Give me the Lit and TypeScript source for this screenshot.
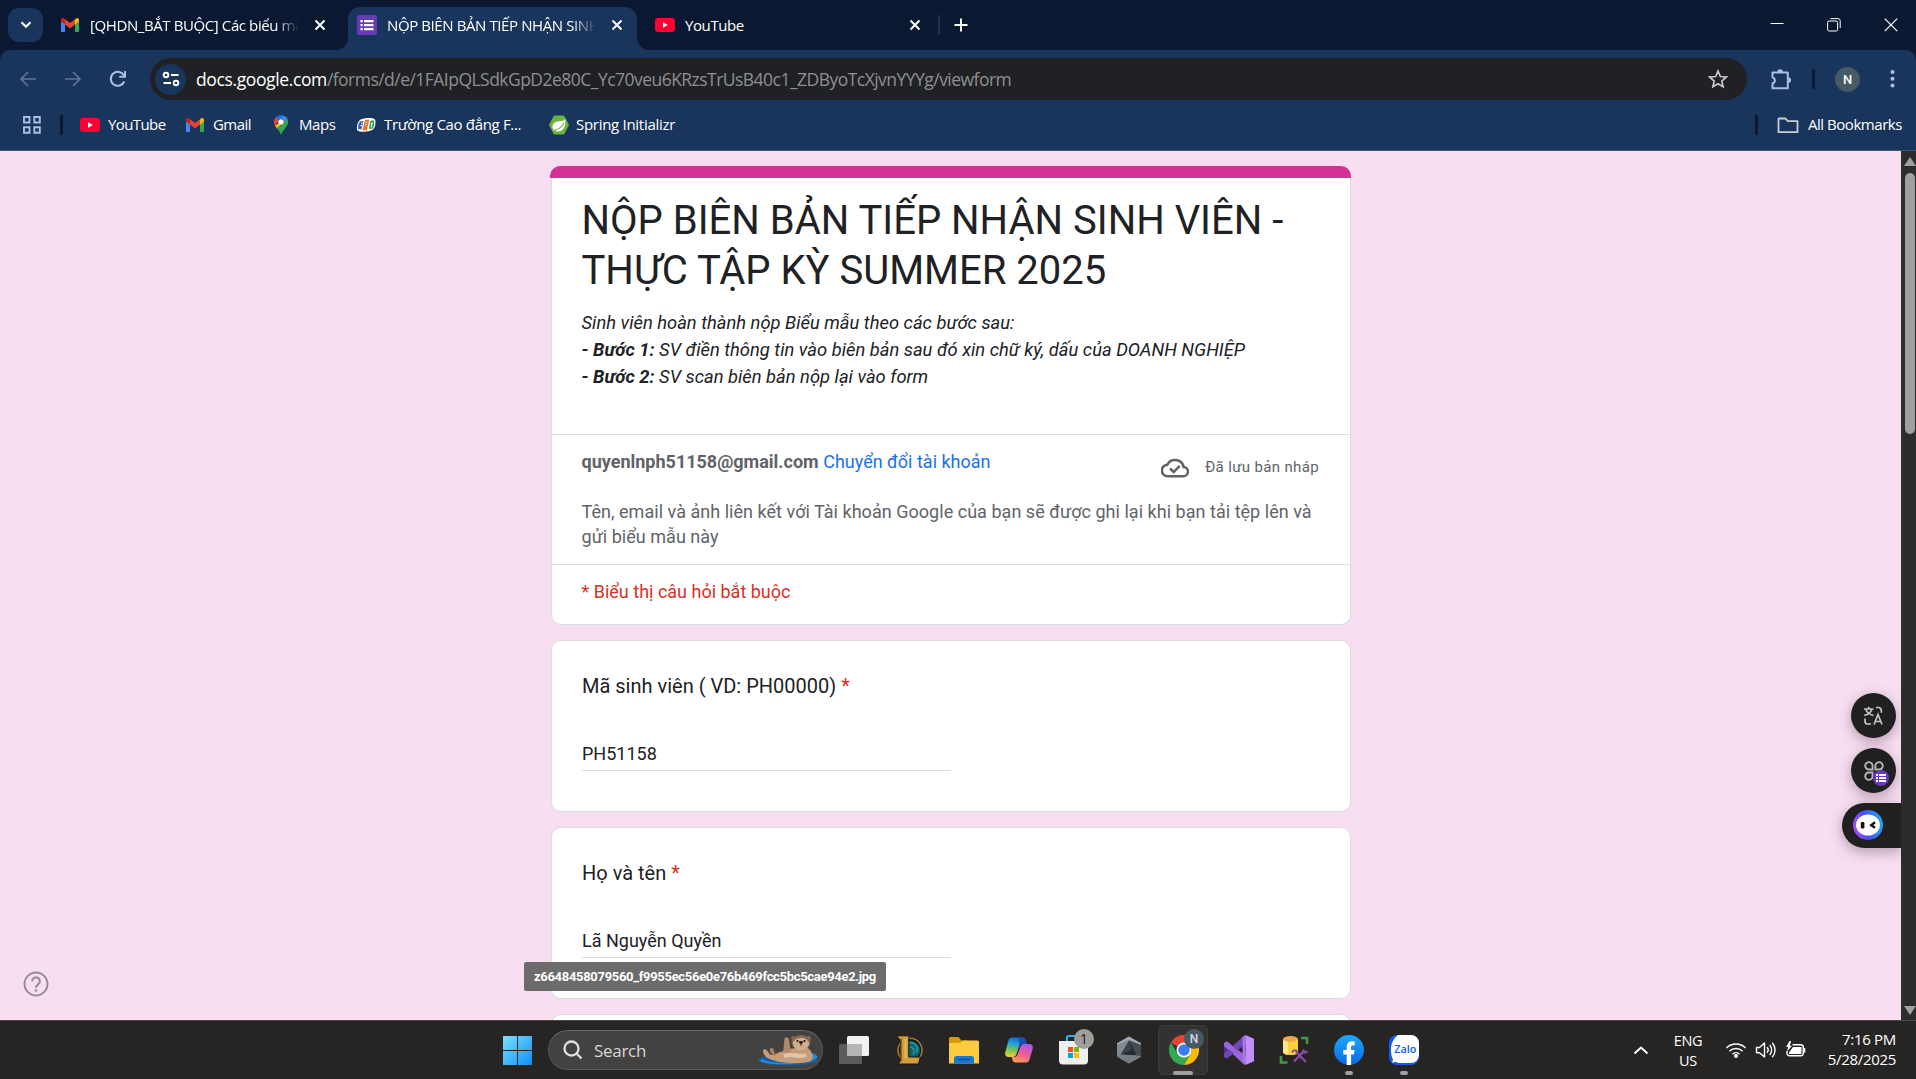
import { LitElement, html, svg, css, nothing } from "lit";
import { customElement, property } from "lit/decorators.js";

const gmail = svg`<svg width="18" height="14" viewBox="0 0 18 14">
  <path d="M0 2.5V12.7C0 13.4.6 14 1.3 14H4V5.2Z" fill="#4285f4"/>
  <path d="M18 2.5V12.7c0 .7-.6 1.3-1.3 1.3H14V5.2Z" fill="#34a853"/>
  <path d="M14 1.4V6.6l4-3V2C18 .3 16.2-.6 14.9.6Z" fill="#fbbc04"/>
  <path d="M4 6.6V1.3l5 3.8 5-3.8V6.6L9 10.4Z" fill="#ea4335"/>
  <path d="M0 2v1.6l4 3V1.3L3.1.6C1.8-.5 0 .3 0 2Z" fill="#c5221f"/></svg>`;
const youtube = svg`<svg width="20" height="14" viewBox="0 0 20 14"><rect width="20" height="14" rx="3.2" fill="#ff0033"/><path d="M8 4.3v5.4L12.8 7z" fill="#fff"/></svg>`;
const forms = (s: number) => svg`<svg width="${s}" height="${s}" viewBox="0 0 20 20"><rect width="20" height="20" rx="1.5" fill="#673ab7"/>
  <path d="M3.5 5h2.2v2.2H3.5zM7 5h9.5v2.2H7zM3.5 9h2.2v2.2H3.5zM7 9h9.5v2.2H7zM3.5 13h2.2v2.2H3.5zM7 13h9.5v2.2H7z" fill="#fff"/></svg>`;
const cross = svg`<svg width="12" height="12" viewBox="0 0 12 12"><path d="M1.5 1.500l9 9M10.500 1.500l-9 9" stroke="#fff" stroke-width="1.900" fill="none"/></svg>`;

@customElement("browser-tabs")
export class BrowserTabs extends LitElement {
  static styles = css`
    :host { display: flex; height: 50px; background: #0a1931; color: #fff; font: 15px "Open Sans", "Noto Sans", sans-serif; }
    svg { display: block; flex: none; }
    .search { width: 35px; height: 34px; margin: 8px 0 0 8px; border-radius: 11px; background: #1a355b; display: grid; place-items: center; flex: none; }
    .tab { display: flex; align-items: center; height: 43px; margin-top: 7px; box-sizing: border-box; padding-bottom: 7px; flex: none; }
    .t1 { width: 305px; padding-left: 18px; }
    .t2 { width: 289px; padding-left: 9px; background: #1a355b; border-radius: 12px 12px 0 0; position: relative; }
    .t2::before, .t2::after { content: ""; position: absolute; bottom: 0; width: 12px; height: 12px; }
    .t2::before { right: 100%; background: radial-gradient(circle at 0 0, #0a1931 11.5px, #1a355b 12.3px); }
    .t2::after { left: 100%; background: radial-gradient(circle at 100% 0, #0a1931 11.5px, #1a355b 12.3px); }
    .t3 { width: 301px; padding-left: 18px; }
    .name { width: 210px; margin: 0 14px 0 10px; overflow: hidden; white-space: nowrap; letter-spacing: -0.4px; line-height: 24px; }
    .t1 .name { margin: 0 14px 0 11px; }
    .fade { -webkit-mask-image: linear-gradient(90deg, #000 185px, transparent 209px); mask-image: linear-gradient(90deg, #000 185px, transparent 209px); }
    .rule { width: 2px; height: 20px; margin: 15px 14px 0 0; background: #1a355b; border-radius: 1px; }
    .plus { margin-top: 18px; }
    .win { margin: 18px 18px 0 auto; display: flex; gap: 43px; }
  `;
  render() {
    return html`
      <div class="search"><svg width="12" height="8" viewBox="0 0 12 8"><path d="M1.500 1.300L6 5.800l4.500-4.500" fill="none" stroke="#fff" stroke-width="2.100"/></svg></div>
      <div class="tab t1">${gmail}<div class="name fade">[QHDN_BẮT BUỘC] Các biểu mẫu</div>${cross}</div>
      <div class="tab t2">${forms(20)}<div class="name fade">NỘP BIÊN BẢN TIẾP NHẬN SINH VIÊN</div>${cross}</div>
      <div class="tab t3">${youtube}<div class="name">YouTube</div>${cross}</div>
      <div class="rule"></div>
      <svg class="plus" width="14" height="14"><path d="M7 .5v13M.5 7h13" stroke="#fff" stroke-width="1.900"/></svg>
      <div class="win">
        <svg width="14" height="14"><path d="M.5 5.500h13" stroke="#fff"/></svg>
        <svg width="14" height="14" fill="none" stroke="#fff"><rect x=".6" y="3" width="10" height="10" rx="1.500"/><path d="M3.500.6H11a2.200 2.200 0 0 1 2.200 2.200V10"/></svg>
        <svg width="14" height="14" fill="none" stroke="#fff" stroke-width="1.200"><path d="M.7.700l12.500 12.500M13.200.700L.7 13.200"/></svg>
      </div>`;
  }
}

@customElement("browser-toolbar")
export class BrowserToolbar extends LitElement {
  static styles = css`
    :host { display: block; background: #0a1931; color: #fff; font-family: "Open Sans", "Noto Sans", sans-serif; }
    svg { display: block; flex: none; }
    .wrap { height: 100px; background: #1a355b; border-radius: 10px 10px 0 0; border-bottom: 1px solid #3d5578; }
    .nav { display: flex; align-items: center; padding-top: 8px; height: 42px; }
    .back { margin-left: 19px; } .fwd { margin-left: 27px; } .rel { margin-left: 27px; }
    .omni { margin-left: 23px; width: 1597px; height: 42px; border-radius: 21px; background: #202124; display: flex; align-items: center; box-sizing: border-box; padding: 0 19px 0 5px; }
    .site { width: 31px; height: 31px; border-radius: 50%; background: #1a355b; display: grid; place-items: center; margin-right: 10px; }
    .url { font-size: 17.5px; letter-spacing: -0.53px; color: #8e8f92; flex: 1; white-space: nowrap; }
    .url b { font-weight: 400; color: #fff; letter-spacing: -0.38px; }
    .puz { margin-left: 23px; }
    .rule { width: 3px; height: 20px; border-radius: 1px; background: #0a1931; }
    .nav .rule { margin: 0 20px 0 20px; }
    .av { width: 25px; height: 25px; border-radius: 50%; background: #455a64; text-align: center; font: 500 13px/25px Roboto, sans-serif; }
    .dots { margin-left: 30px; }
    .marks { display: flex; align-items: center; height: 50px; font-size: 15px; letter-spacing: -0.45px; }
    .marks span { white-space: nowrap; line-height: 20px; padding-bottom: 2px; }
    .apps { margin: 0 18px 0 22px; }
    .m { display: flex; align-items: center; box-sizing: border-box; }
    .yt { width: 106px; gap: 8px; padding-left: 17px; letter-spacing: -0.6px; }
    .gm { width: 105px; gap: 9px; padding-left: 17px; letter-spacing: -0.55px; }
    .mp { width: 82px; gap: 11px; }
    .fp { width: 193px; gap: 8px; letter-spacing: -0.33px; }
    .sp { gap: 7px; letter-spacing: -0.29px; }
    .all { margin-left: auto; display: flex; align-items: center; padding-right: 14px; }
    .all svg { margin: 0 9px 0 19px; }
  `;
  render() {
    return html`<div class="wrap">
      <div class="nav">
        <svg class="back" width="18" height="18" fill="none" stroke="#5d7698" stroke-width="1.700"><path d="M17 9H2.500M9 2L2 9l7 7"/></svg>
        <svg class="fwd" width="18" height="18" fill="none" stroke="#5d7698" stroke-width="1.700"><path d="M1 9h14.500M9 2l7 7-7 7"/></svg>
        <svg class="rel" width="18" height="18" fill="none" stroke="#a9bfe4" stroke-width="2"><path d="M15.300 11.500A7 7 0 1 1 15 5.500M16 1v5.800h-5.800"/></svg>
        <div class="omni">
          <div class="site"><svg width="18" height="16" fill="none" stroke="#fff" stroke-width="1.900"><circle cx="4" cy="4" r="2.300"/><path d="M9 4h7.500M1.500 12H9"/><circle cx="14" cy="12" r="2.300"/></svg></div>
          <div class="url"><b>docs.google.com</b>/forms/d/e/1FAIpQLSdkGpD2e80C_Yc70veu6KRzsTrUsB40c1_ZDByoTcXjvnYYYg/viewform</div>
          <svg width="20" height="20" viewBox="0 0 20 20" fill="none" stroke="#c7c7c7" stroke-width="1.700"><path d="M10 2l2.300 5.500 6 .5-4.500 4 1.300 5.800L10 14.700 4.900 17.800 6.200 12 1.700 8l6-.5z"/></svg>
        </div>
        <svg class="puz" width="22" height="22" viewBox="0 0 22 22"><path d="M2.500 4.500h15.300v15.700H2.500v-4.800a3.100 3.100 0 0 0 0-6z" fill="none" stroke="#a9bfe4" stroke-width="2" stroke-linejoin="round"/><path d="M7.400 4a2.800 2.800 0 0 1 5.600 0zM18.300 9.300a2.800 2.800 0 0 1 0 5.600z" fill="#a9bfe4"/></svg>
        <div class="rule"></div>
        <div class="av">N</div>
        <svg class="dots" width="5" height="20" fill="#a9bfe4"><circle cx="2.500" cy="3" r="2"/><circle cx="2.500" cy="9.800" r="2"/><circle cx="2.500" cy="16.500" r="2"/></svg>
      </div>
      <div class="marks">
        <svg class="apps" width="20" height="20" fill="none" stroke="#a9bfe4" stroke-width="1.900"><path d="M2 2h5.500v5.500H2zM12.300 2h5.500v5.500h-5.500zM2 12.300h5.500v5.500H2zM12.300 12.300h5.500v5.500h-5.500z"/></svg>
        <div class="rule"></div>
        <div class="m yt">${youtube}<span>YouTube</span></div>
        <div class="m gm">${gmail}<span>Gmail</span></div>
        <div class="m mp">
          <svg width="14" height="20" viewBox="0 0 14 20"><path d="M7 0A7 7 0 0 0 1.600 2.500L5 5.400 10 .7A7 7 0 0 0 7 0Z" fill="#1a73e8"/><path d="M1.600 2.500A7 7 0 0 0 .9 10.500L5 5.400Z" fill="#ea4335"/><path d="M10 .7L4.900 8.500A2.700 2.700 0 0 1 5 5.300L10 .7A7 7 0 0 1 13.200 3.600L.9 10.500 3 13.500 13.200 3.600Z" fill="#fbbc04"/><path d="M13.200 3.600A7 7 0 0 1 12.900 10.700C11 14 8.500 15.500 7 20 6 16.500 4.500 15.300 3 13.300L9 8.800Z" fill="#34a853"/><path d="M10 .7A7 7 0 0 1 13.200 3.600L9.200 8.700A2.700 2.700 0 0 0 5 5.300Z" fill="#4285f4"/><circle cx="7" cy="7" r="2.600" fill="#fff"/></svg><span>Maps</span></div>
        <div class="m fp">
          <svg width="20" height="16" viewBox="0 0 20 16"><path d="M4.500 2.500C8 1 16 0 19 2.500c1.200 3 .3 8-2 10C13 15 4 15.500 1.500 13.500 0 11 1.500 4.500 4.500 2.500Z" fill="#fff"/><path d="M4.200 4.200h3.300L5.500 12.200H2.400C1.800 9.500 2.400 6 4.200 4.200Z" fill="#2a5fae"/><path d="M9 2.800h4.300l-2.500 10.500H6.500z" fill="#f36f21"/><path d="M14.600 3.600h3.300c.8 2.600.2 6.200-1.500 8.200h-3.700z" fill="#21a350"/><path d="M5 6.200h1.700M4.500 8.600h1.700M9.700 5.300h1.500M9.200 7.800h1.500M15 6.300h2M16 6.300l-1 4" stroke="#fff" stroke-width="1.100"/></svg><span>Trường Cao đẳng F...</span></div>
        <div class="m sp">
          <svg width="20" height="20" viewBox="0 0 20 20"><path d="M5.200 1h9.600L19.500 10l-4.700 9H5.200L.5 10z" fill="#6db33f" stroke="#6db33f" stroke-linejoin="round"/><path d="M16.300 3.500C15.500 6.500 12 5.800 7.500 6.800 3 8.300 2.500 12.800 5 15.500c4.500 2.300 12.800 1 11.300-12Z" fill="#fff"/><path d="M5 15.600c4-1 8-3 10-8" stroke="#6db33f" fill="none" stroke-width="1.100"/></svg><span>Spring Initializr</span></div>
        <div class="all"><div class="rule"></div><svg width="22" height="17" viewBox="0 0 22 17" fill="none" stroke="#c9cdd3" stroke-width="1.800"><path d="M2 1.500h6.500l2.300 2.700H20.500v11H1.500V2z" stroke-linejoin="round"/></svg><span>All Bookmarks</span></div>
      </div></div>`;
  }
}

@customElement("question-card")
export class QuestionCard extends LitElement {
  @property() label = "";
  @property() value = "";
  static styles = css`
    :host { display: block; box-sizing: border-box; height: 172px; flex: none; background: #fff; border: 1px solid #dadce0; border-radius: 10px; padding: 30px; color: #202124; font-family: Roboto, sans-serif; }
    .l { font-size: 20px; line-height: 30px; }
    .l i { color: #d93025; font-style: normal; }
    .v { margin-top: 37px; width: 369px; height: 32px; border-bottom: 1px solid #dadce0; font-size: 18px; line-height: 31px; }
  `;
  render() {
    return this.label
      ? html`<div class="l">${this.label} <i>*</i></div><div class="v">${this.value}</div>`
      : nothing;
  }
}

@customElement("form-page")
export class FormPage extends LitElement {
  static styles = css`
    :host { display: flex; height: 869px; background: #f7dff1; position: relative; overflow: hidden; font-family: Roboto, sans-serif; color: #202124; }
    svg { display: block; }
    .col { width: 801px; margin: 15px 0 0 550px; display: flex; flex-direction: column; gap: 15px; flex: none; }
    question-card { margin-left: 1px; width: 800px; }
    .head { height: 459px; flex: none; }
    .bar { height: 12px; background: #d43096; border-radius: 10px 10px 0 0; }
    .box { margin-left: 1px; box-sizing: border-box; height: 447px; border: 1px solid #dadce0; border-top: 0; background: #fff; border-radius: 0 0 10px 10px; }
    .intro { box-sizing: border-box; height: 257px; padding: 18px 29px 0 29.5px; border-bottom: 1px solid #dadce0; }
    h1 { margin: 0; font-size: 40px; line-height: 50px; font-weight: 400; white-space: nowrap; }
    .desc { margin-top: 13px; font-size: 18.35px; line-height: 27px; font-style: italic; white-space: nowrap; }
    .acct { box-sizing: border-box; height: 130px; padding: 14px 30px 0 29.5px; border-bottom: 1px solid #dadce0; font-size: 18px; line-height: 25px; color: #5f6368; }
    .row { display: flex; justify-content: space-between; height: 50px; }
    .row b { font-weight: 700; }
    a { color: #1a73e8; }
    .saved { display: flex; align-items: center; height: 25px; margin: 6px 1px 0 0; gap: 16px; font-size: 15px; letter-spacing: 0.35px; }
    .note { white-space: nowrap; letter-spacing: 0.03px; }
    .req { padding: 14px 29.5px; font-size: 18px; line-height: 25px; color: #d93025; }
    .sb { position: absolute; right: 0; top: 0; width: 15px; height: 869px; background: #2c2c2c; display: flex; flex-direction: column; }
    .sb svg { margin-left: 3px; }
    .thumb { width: 10px; height: 261px; margin: 7px 0 0 4px; border-radius: 5px; background: #9f9f9f; flex: none; }
    .up { margin-top: 6px; } .dn { margin-top: auto; margin-bottom: 5px; }
    .help { position: absolute; left: 23px; top: 820px; }
    .tip { position: absolute; left: 524px; top: 811px; width: 362px; height: 29px; box-sizing: border-box; border-radius: 2px; background: rgba(97,97,97,.93); color: #fff; font-weight: 700; font-size: 13px; letter-spacing: -0.31px; line-height: 29px; text-align: center; white-space: nowrap; }
    .float { position: absolute; right: 15px; top: 542px; display: flex; flex-direction: column; align-items: flex-end; gap: 10px; }
    .fb { width: 45px; height: 45px; margin-right: 5px; border-radius: 50%; background: #202020; box-shadow: 0 4px 14px rgba(60,20,50,.35); display: grid; place-items: center; position: relative; }
    .fb .mini { position: absolute; left: 22px; top: 22px; width: 16px; height: 16px; border-radius: 50%; background: #673ab7; display: grid; place-items: center; }
    .pill { width: 59px; height: 45px; border-radius: 23px 0 0 23px; background: #202020; box-shadow: 0 4px 14px rgba(60,20,50,.35); box-sizing: border-box; padding: 7px 0 0 11px; }
  `;
  render() {
    return html`
      <div class="col">
        <div class="head"><div class="bar"></div><div class="box">
          <div class="intro">
            <h1>NỘP BIÊN BẢN TIẾP NHẬN SINH VIÊN -<br>THỰC TẬP KỲ SUMMER 2025</h1>
            <div class="desc">Sinh viên hoàn thành nộp Biểu mẫu theo các bước sau:<br><b>- Bước 1:</b> SV điền thông tin vào biên bản sau đó xin chữ ký, dấu của DOANH NGHIỆP<br><b>- Bước 2:</b> SV scan biên bản nộp lại vào form</div>
          </div>
          <div class="acct">
            <div class="row"><div><b>quyenlnph51158@gmail.com</b> <a>Chuyển đổi tài khoản</a></div>
              <div class="saved"><svg width="28" height="22" viewBox="0 0 28 22" fill="none" stroke="#5f6368" stroke-width="2.500"><path d="M7 19.300h15a4.600 4.600 0 0 0 .6-9.200A8.700 8.700 0 0 0 6.300 7.700 5.800 5.800 0 0 0 7 19.300Z"/><path d="M9 11.500l3.700 3.500 6-6.200"/></svg><span>Đã lưu bản nháp</span></div></div>
            <div class="note">Tên, email và ảnh liên kết với Tài khoản Google của bạn sẽ được ghi lại khi bạn tải tệp lên và<br>gửi biểu mẫu này</div>
          </div>
          <div class="req">* Biểu thị câu hỏi bắt buộc</div>
        </div></div>
        <question-card label="Mã sinh viên ( VD: PH00000)" value="PH51158"></question-card>
        <question-card label="Họ và tên" value="Lã Nguyễn Quyền"></question-card>
        <question-card></question-card>
      </div>
      <div class="help"><svg width="26" height="26" viewBox="0 0 26 26" fill="none" stroke="#9b8f9a" stroke-width="2"><circle cx="13" cy="13" r="11.500"/><path d="M9.200 10.200a3.800 3.800 0 1 1 6.200 3c-1.500 1.200-2.400 1.800-2.400 3.600" stroke-width="2.300"/><path d="M13 18.200v2.400" stroke-width="2.400"/></svg></div>
      <div class="float">
        <div class="fb"><svg width="20" height="20" viewBox="0 0 20 20" fill="none" stroke="#c4c4c4" stroke-width="1.700"><path d="M0 3h9.500M4.700.7v2M8 3C7 6 4.500 8.500.3 9.500M1.800 3.500C3 6.500 5.500 8.500 9.500 9.500M12 1.500h2.500A2.800 2.800 0 0 1 17.300 4.300v2.500M1 12.500v2.700a2.800 2.800 0 0 0 2.800 2.800H7M10 18.500l4-10 4 10M11.500 15.500h5"/></svg></div>
        <div class="fb"><svg width="20" height="20" viewBox="0 0 20 20" fill="none" stroke="#b5b5b5" stroke-width="1.900"><path d="M8.600 8.500H5A3.700 3.700 0 1 1 8.600 5zM11.400 8.500V5A3.700 3.700 0 1 1 15 8.500zM8.600 11.500V15A3.700 3.700 0 1 1 5 11.500z"/></svg><div class="mini"><svg width="10" height="10" fill="#fff"><path d="M0 1h2v2H0zM3 1h7v2H3zM0 4h2v2H0zM3 4h7v2H3zM0 7h2v2H0zM3 7h7v2H3z"/></svg></div></div>
        <div class="pill"><svg width="30" height="30" viewBox="0 0 30 30"><defs><linearGradient id="g" x1="0" y1=".7" x2="1" y2=".5"><stop offset="0" stop-color="#b04cf5"/><stop offset=".45" stop-color="#4a4dfb"/><stop offset="1" stop-color="#1ea6ee"/></linearGradient></defs><circle cx="15" cy="15" r="15" fill="url(#g)"/><ellipse cx="15" cy="15" rx="12" ry="10.500" fill="#fff"/><rect x="7.800" y="12" width="3.600" height="6.500" rx="1.200" fill="#111"/><path d="M22 12.300l-3.800 2.900 3.800 2.600" fill="none" stroke="#111" stroke-width="2.400"/></svg></div>
      </div>
      <div class="tip">z6648458079560_f9955ec56e0e76b469fcc5bc5cae94e2.jpg</div>
      <div class="sb"><svg class="up" width="12" height="9"><path d="M6 0l6 9H0z" fill="#9f9f9f"/></svg><div class="thumb"></div><svg class="dn" width="12" height="10"><path d="M6 10L0 1h12z" fill="#9f9f9f"/></svg></div>`;
  }
}

const apps = {
  view: svg`<svg width="30" height="30"><rect y="9" width="23" height="20" rx="1.500" fill="#5b5b5b"/><rect x="8" y="1" width="22" height="20" rx="1.500" fill="#f1f1f1"/><path d="M8 9h15v12H8z" fill="#b5b5b5"/></svg>`,
  lol: svg`<svg width="30" height="30" viewBox="0 0 30 30"><circle cx="16" cy="15.300" r="12" fill="#05202a" stroke="#a77b2c" stroke-width="1.500"/><circle cx="17" cy="15.300" r="9" fill="#0c5f6c"/><path d="M15 8c6-1.500 9.500 4 7.500 10M16 12c4 0 5 4 3 7.500" stroke="#2298a0" fill="none" stroke-width="1.700"/><path d="M2.500.800H15.300L14.800 4V22H26.300L24.500 29H4.300L6.300 26V5z" fill="#d19d42" stroke="#1d150a"/><path d="M7.300 3.500V26.500" stroke="#8e6322" stroke-width="1.500"/><path d="M11.500 4V23" stroke="#e2b660" stroke-width="2"/></svg>`,
  files: svg`<svg width="30" height="30" viewBox="0 0 30 30"><path d="M0 3.500A1.500 1.500 0 0 1 1.500 2h8l3 3.500H18V10H0z" fill="#d99a09"/><path d="M0 8h11l3-2.500h14.500A1.500 1.500 0 0 1 30 7v21.500H0z" fill="#fecb3e"/><path d="M5 28.500v-5A2.500 2.500 0 0 1 7.500 21h15a2.500 2.500 0 0 1 2.500 2.500v5z" fill="#1379d4"/><path d="M9 24.500h12" stroke="#0b4f95" stroke-width="1.500"/></svg>`,
  copilot: svg`<svg width="30" height="28" viewBox="0 0 30 28"><defs><linearGradient id="c1" x1=".5" y1="0" x2=".3" y2="1"><stop offset="0" stop-color="#1b62d8"/><stop offset=".35" stop-color="#1fa9d6"/><stop offset=".7" stop-color="#86c64a"/><stop offset="1" stop-color="#f4cf2c"/></linearGradient><linearGradient id="c2" x1=".7" y1="0" x2=".3" y2="1"><stop offset="0" stop-color="#a45bea"/><stop offset=".5" stop-color="#ee5a97"/><stop offset="1" stop-color="#fb9b55"/></linearGradient></defs><path d="M8 1.500h10.500c2 0 2.800 1.500 3.500 4l.8 2.500h-4c-2.500 0-3.600 1.600-4.300 4l-2 6c-.7 2-2 3-4 3H4.500C1.800 21 .6 18.500 1.300 16L4.500 4.500C5 2.500 6 1.500 8 1.500Z" fill="url(#c1)"/><path d="M22 26.500H11.500c-2 0-2.800-1.500-3.500-4l-.5-1.500h2.300c2.500 0 3.600-1.600 4.300-4l2.200-6c.7-2 2-3 4-3h5.200c2.700 0 3.900 2.500 3.200 5L25.500 23.500c-.5 2-1.500 3-3.500 3Z" fill="url(#c2)"/><path d="M15 1.500h3.500c2 0 2.800 1.500 3.500 4l.8 2.500h-4c-1.800 0-2.800.8-3.500 2z" fill="#1552b8"/></svg>`,
  store: svg`<svg width="30" height="30" viewBox="0 0 30 30"><path d="M8 7V2.500A1.500 1.500 0 0 1 9.500 1h10" fill="none" stroke="#29b3ee" stroke-width="2"/><path d="M0 6h29v19.500a4 4 0 0 1-4 4H4a4 4 0 0 1-4-4z" fill="#efefef"/><path d="M9 12h5v5H9z" fill="#f25022"/><path d="M15 12h5v5h-5z" fill="#7fba00"/><path d="M9 18h5v5H9z" fill="#00a4ef"/><path d="M15 18h5v5h-5z" fill="#ffb900"/></svg>`,
  cube: svg`<svg width="28" height="28" viewBox="0 0 28 28"><path d="M14 .5l12 6.800v13.400L14 27.500 2 20.700V7.300z" fill="#5e676e"/><path d="M14 .5L2 7.300v2l12-5 12 5v-2z" fill="#a1a9af"/><path d="M2 9.300L14 4.300 5.500 18.500 2 20.700z" fill="#828b92"/><path d="M14.500 4.500l7.500 15-16-1z" fill="#252b30"/><path d="M14.500 4.500L26 9v11.500L22 19.500z" fill="#454d54"/><path d="M2 20.700l4-2.200 16 1 4 1.200L14 27.500z" fill="#747d84"/><path d="M14.500 4.500L16.500 14 6 18.500z" fill="#3b444a"/></svg>`,
  chrome: svg`<svg width="30" height="30" viewBox="0 0 30 30"><path d="M15 15L2 7.500A15 15 0 0 1 28 7.500H15z" fill="#ea4335"/><path d="M2 7.500A15 15 0 0 0 15 30l6.500-11.300L15 15 8.500 18.700z" fill="#34a853"/><path d="M28 7.500A15 15 0 0 1 15 30l6.500-11.300A7.500 7.500 0 0 0 15 7.500z" fill="#fbbc04"/><circle cx="15" cy="15" r="7.500" fill="#fff"/><circle cx="15" cy="15" r="5.800" fill="#3b7ded"/></svg>`,
  vs: svg`<svg width="30" height="30" viewBox="0 0 30 30"><path d="M0 8l3-1.500 5 4.500v8l-5 4.500L0 22z" fill="#52318f"/><path d="M3 6.500L0 8v3l20 18.500 2-.5V21z" fill="#9a66dd"/><path d="M3 23.500L0 22v-3L20 .5l2 .5v8z" fill="#7446b5"/><path d="M3 6.500L8 11l5 4.300-3 3L0 10V8z" fill="#9a66dd"/><path d="M21.500 0L30 3.800v22.400L21.500 30z" fill="#c190fa"/><path d="M21.500 0v30l-3-2.500V2.500z" fill="#a775ea"/></svg>`,
  sql: svg`<svg width="30" height="30" viewBox="0 0 30 30"><path d="M4 4v13c0 1.800 3.500 3 8 3s7-1.200 7-3V4z" fill="#fbd03d"/><path d="M4 4v13c0 1.500 2 2.500 5 2.900V4z" fill="#fde68a"/><ellipse cx="11.500" cy="4" rx="7.500" ry="3" fill="#efa650"/><path d="M22 3h6v6M2 21v6.500h6.500" fill="none" stroke="#3e9b45" stroke-width="2.600"/><path d="M15 26.500L25.500 15.500M17 17l10 10M13 17.500c1.500-3 4.500-3 6 0M24 14.500l1.500 3 3-1" fill="none" stroke="#8b4aa8" stroke-width="2.200"/></svg>`,
  fb: svg`<svg width="30" height="30" viewBox="0 0 30 30"><defs><linearGradient id="f" x1="0" y1="0" x2="0" y2="1"><stop offset="0" stop-color="#1ba9fd"/><stop offset="1" stop-color="#0a69e3"/></linearGradient></defs><circle cx="15" cy="15" r="15" fill="url(#f)"/><path d="M12.700 30V19.500H9.300V15h3.400v-2.800c0-3.800 2-5.900 5.400-5.900 1.300 0 2.600.3 2.600.3v3.700h-1.500c-1.700 0-2.100.9-2.100 2V15h3.500l-.7 4.500h-2.800V30z" fill="#fff"/></svg>`,
};

@customElement("task-bar")
export class TaskBar extends LitElement {
  static styles = css`
    :host { display: flex; height: 59px; box-sizing: border-box; border-top: 1px solid #4b4947; background: #272524; color: #fff; font: 15px "Open Sans", "Noto Sans", sans-serif; padding-left: 490px; }
    svg { display: block; flex: none; }
    .cell { width: 55px; height: 58px; display: grid; place-items: center; position: relative; flex: none; }
    .on::before { content: ""; position: absolute; left: 2px; top: 4px; width: 50px; height: 50px; box-sizing: border-box; border: 1px solid #3f3d3c; border-radius: 5px; background: #343231; }
    .cell svg { position: relative; }
    .search { width: 275px; height: 40px; box-sizing: border-box; margin: 9px 3px 0; border: 1px solid #595756; border-top-color: #696766; border-radius: 20px; background: #444241; display: flex; align-items: center; padding: 0 3px 0 14px; flex: none; }
    .search span { font-size: 17px; margin-left: 11px; flex: 1; color: #d6d6d6; letter-spacing: -0.3px; }
    .badge { position: absolute; left: 28px; top: 8px; width: 20px; height: 20px; border-radius: 50%; background: #a09e9b; color: #1d1d1d; text-align: center; font-size: 14.5px; line-height: 20px; }
    .n { background: #455a64; color: #d5dbde; font: 500 12px/20px Roboto, sans-serif; }
    .ind { position: absolute; bottom: 4px; left: 24px; width: 8px; height: 4px; border-radius: 2px; background: #a2a09e; }
    .on .ind { left: 17px; width: 20px; }
    .tray { margin-left: auto; display: flex; padding-right: 20px; }
    .tray svg { margin-top: 20px; }
    .lang, .time { line-height: 20px; padding-top: 8px; letter-spacing: -0.3px; }
    .lang { text-align: center; width: 46px; margin: 0 14px 0 16px; padding-top: 10px; font-size: 14.5px; }
    .time { text-align: right; width: 89px; }
    .net { display: flex; gap: 8px; }
  `;
  render() {
    return html`
      <div class="cell"><svg width="30" height="30" viewBox="0 0 30 30"><defs><linearGradient id="w" x1="0" y1="0" x2="1" y2="1"><stop offset="0" stop-color="#7fe0ff"/><stop offset="1" stop-color="#0c8ef5"/></linearGradient></defs><path d="M0 1h14v14H0zM15 1h14v14H15zM0 16h14v14H0zM15 16h14v14H15z" fill="url(#w)"/></svg></div>
      <div class="search">
        <svg width="20" height="20" fill="none" stroke="#dcdfe3" stroke-width="2.300"><circle cx="8.500" cy="8.500" r="7"/><path d="M13.500 13.500l5 5"/></svg>
        <span>Search</span>
        <svg width="62" height="32" viewBox="0 0 62 32"><ellipse cx="31" cy="26" rx="30" ry="5.500" fill="#175f9e"/><path d="M4 25c14 6 42 5 53-6l4 4C54 31 18 32 4 28Z" fill="#2b8ad0"/><path d="M9 23C4 18 6 13 10 16.500l3 4c5 1 8-2.500 14-3.500l4-2 18-2c6 3 9 10 5 14-8 3.500-35 3-45-4Z" fill="#c59d7b"/><path d="M26 19L27.500 5c1-3 4.500-2 4.500 1l2 12z" fill="#b1896a"/><path d="M13 18c-1-5 3-5.500 4-1.500l1.500 6" fill="#a87f61"/><path d="M27 22c9-3 14 2 22-1" stroke="#e3c6a9" stroke-width="4" fill="none"/><ellipse cx="44" cy="8.500" rx="9.500" ry="7.500" fill="#8b674e"/><ellipse cx="44" cy="10" rx="8" ry="6.300" fill="#cfae8e"/><circle cx="36" cy="4" r="1.900" fill="#8b674e"/><circle cx="52" cy="4" r="1.900" fill="#8b674e"/><circle cx="40.500" cy="7" r="1.100" fill="#111"/><circle cx="47.500" cy="7" r="1.100" fill="#111"/><ellipse cx="44" cy="8.500" rx="2" ry="1.400" fill="#2b1d17"/><path d="M44 9v3" stroke="#4b3429"/></svg>
      </div>
      <div class="cell">${apps.view}</div>
      <div class="cell">${apps.lol}</div>
      <div class="cell">${apps.files}</div>
      <div class="cell">${apps.copilot}</div>
      <div class="cell">${apps.store}<div class="badge">1</div></div>
      <div class="cell">${apps.cube}</div>
      <div class="cell on">${apps.chrome}<div class="badge n">N</div><div class="ind"></div></div>
      <div class="cell">${apps.vs}</div>
      <div class="cell">${apps.sql}</div>
      <div class="cell">${apps.fb}<div class="ind"></div></div>
      <div class="cell"><svg width="30" height="30" viewBox="0 0 30 30"><rect width="30" height="30" rx="8" fill="#0b5cf0"/><path d="M9 0h13a8 8 0 0 1 8 8v12a8 8 0 0 1-8 8H12c-2 0-4-.5-5.500-1.300-1 .6-2.500 1-3.800.8.900-.9 1.300-2 1.300-3C2 21 2 17 2 14 2 8 5 3 9 0Z" fill="#fff"/><text x="16.300" y="17.800" font-family="Open Sans, sans-serif" font-weight="600" font-size="10.800" text-anchor="middle" fill="#0b5cf0">Zalo</text></svg><div class="ind"></div></div>
      <div class="tray">
        <svg width="16" height="16" fill="none" stroke="#fff" stroke-width="1.900"><path d="M1.500 12.500L8 6.500l6.500 6"/></svg>
        <div class="lang">ENG<br>US</div>
        <div class="net">
          <svg width="22" height="18" viewBox="0 0 22 18" fill="none" stroke="#fff" stroke-width="1.500"><path d="M1.500 7a13.500 13.500 0 0 1 19 0M4.400 10.200a9.500 9.500 0 0 1 13.200 0M7.400 13.200a5.300 5.300 0 0 1 7.200 0"/><circle cx="11" cy="15" r="1.300" fill="#fff"/></svg>
          <svg width="22" height="18" viewBox="0 0 22 18" fill="none" stroke="#fff" stroke-width="1.400"><path d="M1.500 6.500h3L9.500 2v14L4.500 11.700h-3zM12 6.300a4 4 0 0 1 0 5.400M14.700 4a7.500 7.500 0 0 1 0 10M17.300 1.800a11 11 0 0 1 0 14.500" stroke-linejoin="round"/></svg>
          <svg width="22" height="18" viewBox="0 0 22 18" fill="none" stroke="#fff" stroke-width="1.400"><path d="M7.500 3.700h8.300a2.500 2.500 0 0 1 2.500 2.500v6a2.500 2.500 0 0 1-2.500 2.500H4.500A2.500 2.500 0 0 1 2 12.200V10"/><path d="M4 13V11.500L8 6h8.500v7zM19 7h1.300v4.400H19zM4.500 0L1.200 6h2L2 10.500 7 4.700H4.800L6 0z" fill="#fff" stroke="none"/></svg>
        </div>
        <div class="time">7:16 PM<br>5/28/2025</div>
      </div>`;
  }
}

@customElement("app-root")
export class AppRoot extends LitElement {
  static styles = css`
    :host { display: flex; flex-direction: column; width: 1916px; height: 1079px; overflow: hidden; }
  `;
  render() {
    return html`<browser-tabs></browser-tabs><browser-toolbar></browser-toolbar><form-page></form-page><task-bar></task-bar>`;
  }
}
